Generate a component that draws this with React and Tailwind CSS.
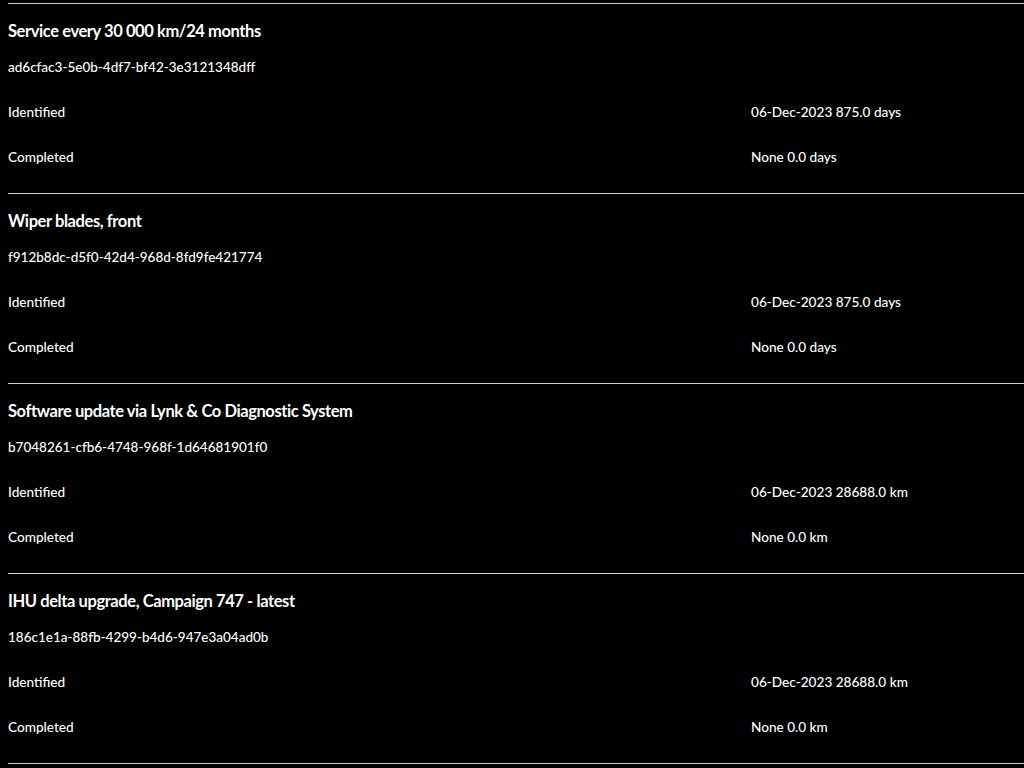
import React from "react";

const items = [
  {
    title: "Service every 30 000 km/24 months",
    id: "ad6cfac3-5e0b-4df7-bf42-3e3121348dff",
    identified: "06-Dec-2023 875.0 days",
    completed: "None 0.0 days",
  },
  {
    title: "Wiper blades, front",
    id: "f912b8dc-d5f0-42d4-968d-8fd9fe421774",
    identified: "06-Dec-2023 875.0 days",
    completed: "None 0.0 days",
  },
  {
    title: "Software update via Lynk & Co Diagnostic System",
    id: "b7048261-cfb6-4748-968f-1d64681901f0",
    identified: "06-Dec-2023 28688.0 km",
    completed: "None 0.0 km",
  },
  {
    title: "IHU delta upgrade, Campaign 747 - latest",
    id: "186c1e1a-88fb-4299-b4d6-947e3a04ad0b",
    identified: "06-Dec-2023 28688.0 km",
    completed: "None 0.0 km",
  },
];

const Row = ({ label, value }) => (
  <div className="grid grid-cols-[743px_1fr] h-5 leading-5 text-[13.6px] font-medium">
    <span>{label}</span>
    <span>{value}</span>
  </div>
);

export default function App() {
  return (
    <div className="min-h-screen bg-black text-white pt-[3px] font-['Lato','Noto_Sans',sans-serif]">
      {items.map((item) => (
        <section key={item.id} className="ml-2 border-t border-[#cfcfcf] pt-[17px] pb-[26px]">
          <h2 className="h-5 leading-5 text-[16.5px] font-bold tracking-tight">{item.title}</h2>
          <p className="mt-4 h-5 leading-5 text-[13.5px] font-medium">{item.id}</p>
          <div className="mt-[25px] flex flex-col gap-[25px]">
            <Row label="Identified" value={item.identified} />
            <Row label="Completed" value={item.completed} />
          </div>
        </section>
      ))}
      <div className="ml-2 border-t border-[#cfcfcf]" />
    </div>
  );
}
